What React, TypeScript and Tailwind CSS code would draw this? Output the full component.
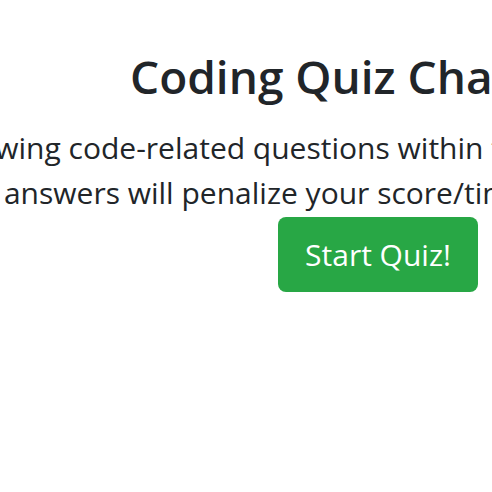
export default function App() {
  return (
    <main className="h-screen w-full overflow-hidden bg-white font-['Open_Sans','Noto_Sans',sans-serif] text-[#212529]">
      <div className="flex w-[756px] flex-col items-center pt-[48px] text-center">
        <h1 className="whitespace-nowrap text-[46px] leading-[57.6px] font-semibold">
          Coding Quiz Challenge
        </h1>
        <p className="mt-[19px] whitespace-nowrap text-[30px] leading-[45px]">
          Try to answer the following code-related questions within the time limit. Keep in mind that incorrect
          <br />
          answers will penalize your score/time by ten seconds!
        </p>
        <button className="mt-[2px] h-[75px] rounded-[8px] bg-[#28a745] px-[27px] text-[30px] leading-[45px] text-white">
          Start Quiz!
        </button>
      </div>
    </main>
  );
}
